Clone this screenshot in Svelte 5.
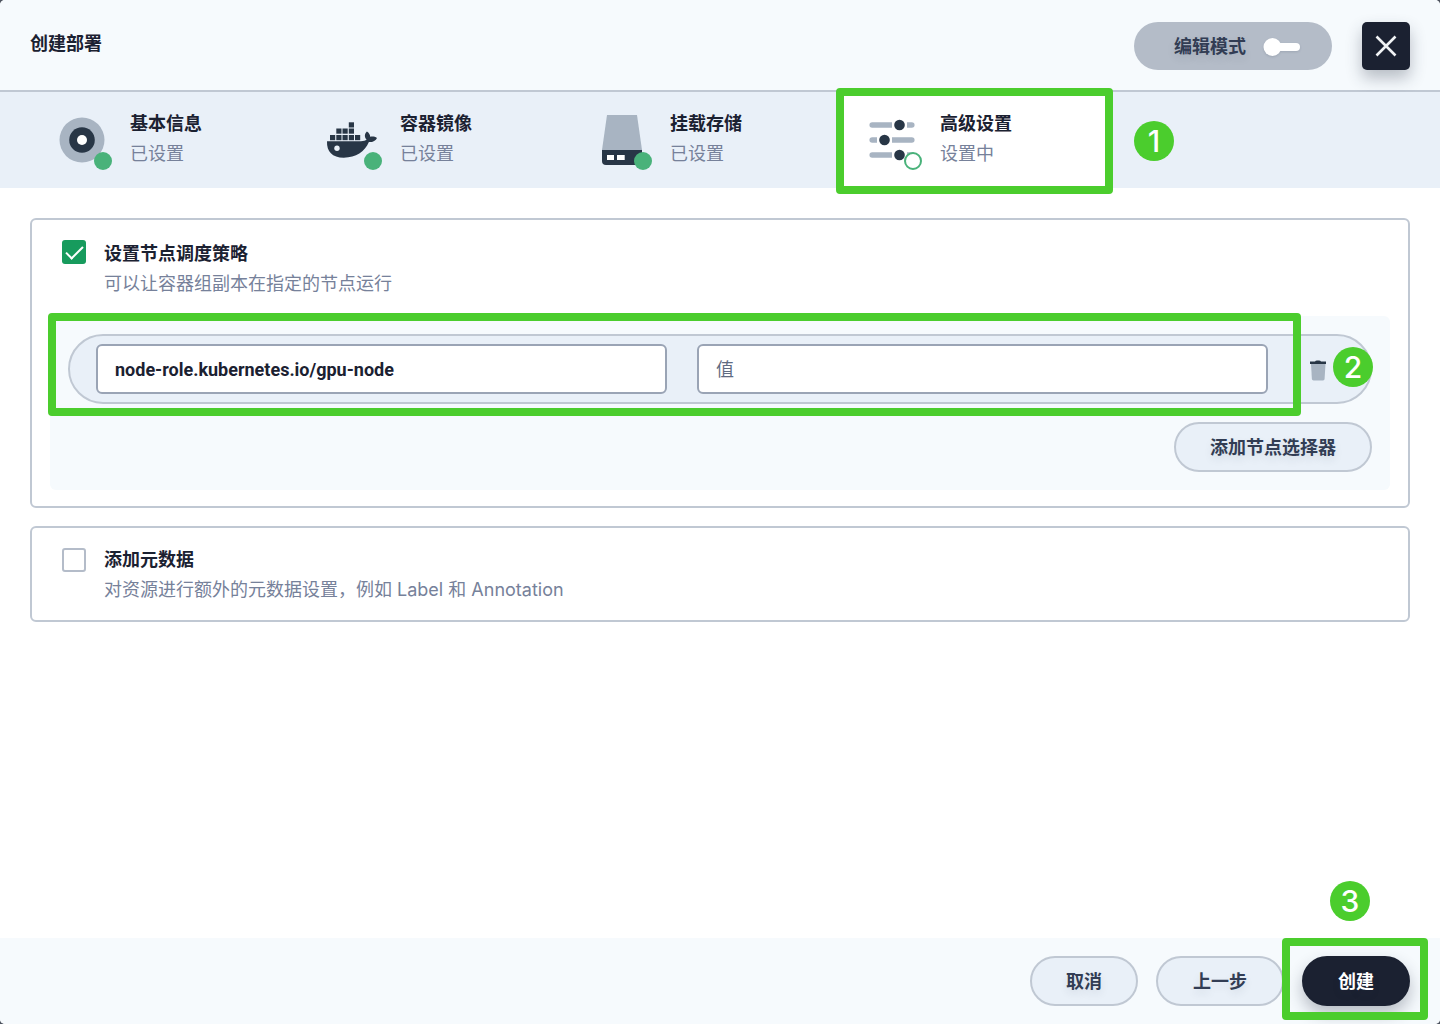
<script>
  const steps = [
    { icon: 'info', title: '基本信息', status: '已设置', done: true },
    { icon: 'docker', title: '容器镜像', status: '已设置', done: true },
    { icon: 'storage', title: '挂载存储', status: '已设置', done: true },
    { icon: 'sliders', title: '高级设置', status: '设置中', done: false }
  ];
  const sliders = [
    { y: 15, knob: 37.5 },
    { y: 30, knob: 22.5 },
    { y: 45, knob: 37.5 }
  ];
  const containers = [[26.8, 12.3], [14.3, 18.5], [20.5, 18.5], [26.8, 18.5], [8, 25], [14.3, 25], [20.5, 25], [26.8, 25], [33, 25]];

  let schedule = $state(true);
  let metadata = $state(false);
  let key = $state('node-role.kubernetes.io/gpu-node');
  let value = $state('');
</script>

<div class="dialog">
  <header>
    <h1>创建部署</h1>
    <button type="button" class="mode" role="switch" aria-checked="false">
      <span>编辑模式</span>
      <svg width="38" height="20" viewBox="0 0 38 20" aria-hidden="true">
        <rect x="8" y="6" width="29" height="8" rx="4" fill="#fff" />
        <circle cx="9.5" cy="10" r="9" fill="#fff" />
      </svg>
    </button>
    <button type="button" class="close" aria-label="关闭">
      <svg width="24" height="24" viewBox="0 0 24 24" aria-hidden="true">
        <path d="M2.5 2.5L21.5 21.5M21.5 2.5L2.5 21.5" stroke="#f1f3f5" stroke-width="2.6" />
      </svg>
    </button>
  </header>

  <nav>
    {#each steps as step}
      <button type="button" class="step" class:current={!step.done}>
        <span class="icon">
          <svg width="60" height="60" viewBox="0 0 60 60" aria-hidden="true">
            {#if step.icon === 'info'}
              <circle cx="30" cy="30" r="22.5" fill="#a8b4c2" />
              <circle cx="30" cy="30" r="12.8" fill="#283646" />
              <circle cx="30" cy="30" r="5" fill="#fff" />
            {:else if step.icon === 'docker'}
              <g fill="#283646">
                {#each containers as [x, y]}
                  <rect {x} {y} width="5.2" height="5.2" />
                {/each}
                <path d="M5 31.2H39C41.5 31.2 43.6 30.5 44.6 29.6C42.4 27.2 42.2 23.7 44.9 21.4C47 22.8 48.2 24.6 48.2 26.8C50.5 26.2 53 26.6 55 27.9C53.9 30.7 50.6 32.3 46.9 32.1C42.7 41.9 34 47.7 21.8 47.7C10.2 47.7 4.6 41.5 5 31.2Z" />
              </g>
              <circle cx="15" cy="38.2" r="2.7" fill="#e9f0f8" />
            {:else if step.icon === 'storage'}
              <path d="M15 5H45L50 40H10Z" fill="#a8b4c2" />
              <path d="M10 40H50V51Q50 55 46 55H14Q10 55 10 51Z" fill="#283646" />
              <path d="M15 45H22V50H15ZM25 45H32.7V50H25Z" fill="#fff" />
            {:else}
              {#each sliders as s}
                <line x1="10.2" y1={s.y} x2="49.8" y2={s.y} stroke="#a8b4c2" stroke-width="5.5" stroke-linecap="round" />
                <rect x={s.knob - 7.5} y={s.y - 4} width="15" height="8" fill="#fff" />
                <circle cx={s.knob} cy={s.y} r="5.3" fill="#283646" />
              {/each}
            {/if}
          </svg>
          <i class="dot" class:open={!step.done}></i>
        </span>
        <span class="text">
          <strong>{step.title}</strong>
          <span class="muted">{step.status}</span>
        </span>
        {#if !step.done}
          <span class="ring"></span>
          <span class="badge">1</span>
        {/if}
      </button>
    {/each}
  </nav>

  <main>
    <section class="card expanded">
      <label class="option">
        <input type="checkbox" bind:checked={schedule} />
        <span class="text">
          <strong>设置节点调度策略</strong>
          <span class="muted">可以让容器组副本在指定的节点运行</span>
        </span>
      </label>
      <div class="panel">
        <div class="selector">
          <input type="text" aria-label="键" placeholder="键" bind:value={key} />
          <input type="text" aria-label="值" placeholder="值" bind:value />
          <button type="button" class="trash" aria-label="删除">
            <svg width="30" height="30" viewBox="0 0 30 30" aria-hidden="true">
              <path d="M8 10H22.5L21.6 25.1Q21.5 26.5 20 26.5H10.5Q9 26.5 8.9 25.1Z" fill="#a8b4c2" />
              <path d="M7 7.5H12Q12.5 6.5 14 6.5H16Q17.5 6.5 18 7.5H23V10H7Z" fill="#283646" />
            </svg>
          </button>
          <span class="ring"></span>
          <span class="badge">2</span>
        </div>
        <button type="button" class="btn">添加节点选择器</button>
      </div>
    </section>

    <section class="card">
      <label class="option">
        <input type="checkbox" bind:checked={metadata} />
        <span class="text">
          <strong>添加元数据</strong>
          <span class="muted">对资源进行额外的元数据设置，例如 Label 和 Annotation</span>
        </span>
      </label>
    </section>
  </main>

  <footer>
    <button type="button" class="btn">取消</button>
    <button type="button" class="btn back">上一步</button>
    <div class="submit">
      <button type="button" class="btn primary">创建</button>
      <span class="ring"></span>
      <span class="badge">3</span>
    </div>
  </footer>
</div>

<style>
  :global(body) {
    margin: 0;
    background: #4d535f;
  }
  .dialog,
  .dialog * {
    box-sizing: border-box;
  }
  .dialog {
    display: flex;
    flex-direction: column;
    min-height: 100vh;
    overflow: hidden;
    border-radius: 5px;
    background: #fff;
    color: #1b2131;
    font: 400 18px/30px Roboto, 'Noto Sans CJK SC', sans-serif;
  }
  button,
  input {
    margin: 0;
    padding: 0;
    border: 0;
    background: none;
    color: inherit;
    font: inherit;
  }
  button {
    cursor: pointer;
  }
  svg {
    display: block;
  }
  header {
    display: flex;
    align-items: center;
    gap: 30px;
    height: 92px;
    padding: 1px 30px 0;
    border-bottom: 2px solid #c0c8d3;
    background: #f6fafd;
  }
  h1 {
    flex: 1;
    margin: 0;
    padding-bottom: 4px;
    font-size: 18px;
    font-weight: 700;
  }
  .mode {
    display: flex;
    align-items: center;
    gap: 17px;
    height: 48px;
    padding: 3px 31px 0 40px;
    border-radius: 24px;
    background: #b4bcc8;
    color: #323d54;
    font-weight: 700;
    text-shadow: 0 4px 8px rgba(36, 46, 66, 0.1);
  }
  .mode svg {
    filter: drop-shadow(0 1px 1px rgba(36, 46, 66, 0.15));
  }
  .close {
    display: grid;
    place-items: center;
    width: 48px;
    height: 48px;
    border-radius: 5px;
    background: #1b2131;
    box-shadow: 0 8px 16px rgba(36, 46, 66, 0.3);
  }
  nav {
    display: flex;
    padding: 0 30px;
    background: #e9f0f8;
  }
  .step {
    position: relative;
    display: flex;
    align-items: center;
    gap: 18px;
    width: 270px;
    height: 96px;
    padding: 0 22px;
    text-align: left;
  }
  .step .text {
    padding-bottom: 2px;
  }
  .current {
    background: #fff;
  }
  .icon {
    position: relative;
  }
  .dot {
    position: absolute;
    right: 0;
    bottom: 0;
    width: 18px;
    height: 18px;
    border-radius: 50%;
    background: #49b27a;
  }
  .dot.open {
    border: 2px solid #49b27a;
    background: #fff;
  }
  .text {
    display: flex;
    flex-direction: column;
  }
  strong {
    font-weight: 700;
  }
  .muted {
    color: #76819a;
    font-family: Inter, 'Noto Sans CJK SC', sans-serif;
  }
  main {
    flex: 1;
    display: flex;
    flex-direction: column;
    gap: 18px;
    padding: 30px;
  }
  .card {
    padding: 16px;
    border: 2px solid #c0c8d3;
    border-radius: 6px;
  }
  .option {
    display: flex;
    gap: 18px;
    height: 60px;
    padding: 0 14px;
  }
  .option .text {
    padding-top: 1px;
  }
  .expanded .option {
    height: 62px;
  }
  .expanded .option .text {
    padding-top: 3px;
  }
  input[type='checkbox'] {
    appearance: none;
    flex: none;
    width: 24px;
    height: 24px;
    margin-top: 4px;
    border: 2px solid #b4bcc9;
    border-radius: 3px;
    background: #fff;
  }
  input[type='checkbox']:checked {
    display: grid;
    place-items: center;
    border: 0;
    background: #179b5d;
  }
  input[type='checkbox']:checked::after {
    content: '';
    width: 15px;
    height: 7px;
    margin-bottom: 4px;
    border: solid #fff;
    border-width: 0 0 2px 2px;
    transform: rotate(-45deg);
  }
  .panel {
    display: flex;
    flex-direction: column;
    align-items: flex-end;
    gap: 18px;
    margin: 18px 2px 0;
    padding: 18px;
    border-radius: 6px;
    background: #f6fafd;
  }
  .selector {
    position: relative;
    display: flex;
    align-items: center;
    align-self: stretch;
    gap: 30px;
    height: 70px;
    padding: 0 37px 0 26px;
    border: 2px solid #c0c8d3;
    border-radius: 35px;
    background: #e9f0f8;
  }
  input[type='text'] {
    flex: 1;
    min-width: 0;
    height: 50px;
    padding: 0 17px;
    border: 2px solid #9aa4b5;
    border-radius: 6px;
    background: #fff;
    font-weight: 700;
  }
  input::placeholder {
    color: #5f6b82;
    font-weight: 400;
    opacity: 1;
  }
  .trash {
    margin-left: 5px;
  }
  .btn {
    height: 50px;
    padding: 2px 34px 0;
    border: 2px solid #c0c8d3;
    border-radius: 25px;
    background: #e9f0f8;
    color: #323d54;
    font-weight: 700;
    text-shadow: 0 4px 8px rgba(36, 46, 66, 0.1);
  }
  .back {
    min-width: 128px;
  }
  .primary {
    border-color: #1b2131;
    background: #1b2131;
    color: #fff;
    box-shadow: 0 8px 16px rgba(36, 46, 66, 0.3);
  }
  footer {
    display: flex;
    justify-content: flex-end;
    gap: 18px;
    padding: 18px 30px;
    background: #f6fafd;
  }
  .submit {
    position: relative;
  }
  .ring {
    position: absolute;
    border: 8px solid #4bcd2d;
    border-radius: 4px;
    pointer-events: none;
  }
  .badge {
    position: absolute;
    display: grid;
    place-items: center;
    width: 40px;
    height: 40px;
    border-radius: 50%;
    background: #4bcd2d;
    color: #fff;
    font: 500 30px/40px Inter, sans-serif;
  }
  .step .ring {
    inset: -4px -3px -6px -4px;
  }
  .step .badge {
    top: 29px;
    left: 294px;
  }
  .selector .ring {
    inset: -23px 69px -14px -22px;
  }
  .selector .badge {
    top: 11px;
    right: -3px;
  }
  .submit .ring {
    inset: -18px -18px -14px -20px;
  }
  .submit .badge {
    top: -75px;
    right: 40px;
  }
</style>
